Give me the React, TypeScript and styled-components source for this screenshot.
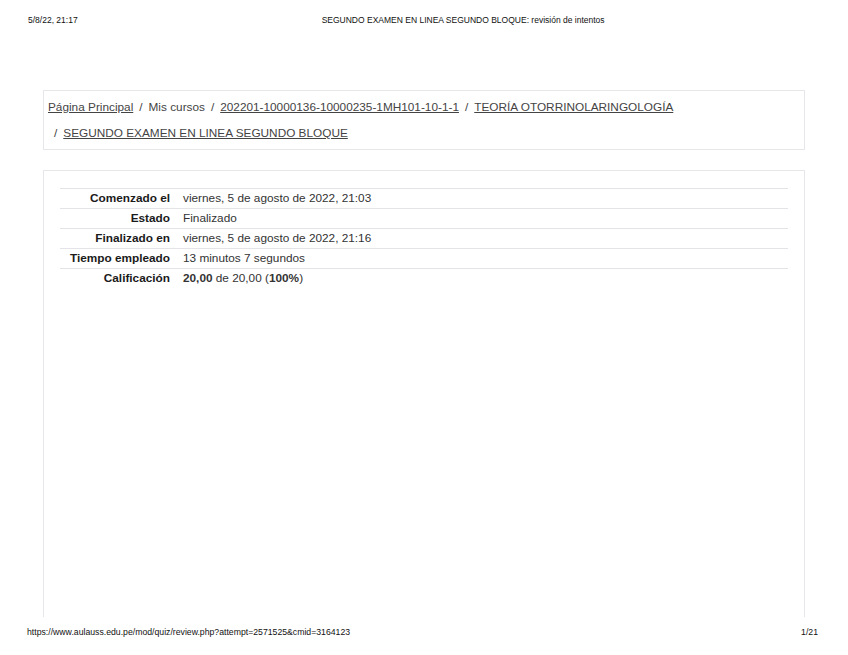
import * as React from 'react';
import styled, { createGlobalStyle } from 'styled-components';

const GlobalStyle = createGlobalStyle`
  html, body {
    margin: 0;
    padding: 0;
    background: #fff;
  }
  body {
    font-family: "Liberation Sans", Arial, sans-serif;
    color: #222;
  }
`;

const Sheet = styled.div`
  height: 655px;
  display: flex;
  flex-direction: column;
  overflow: hidden;
`;

const PrintHeader = styled.header`
  height: 40px;
  display: flex;
  align-items: center;
  padding: 0 28px;
  font-size: 8.5px;
  color: #111;
`;

const HeaderTitle = styled.span`
  margin-left: 244px;
`;

const Content = styled.main`
  flex: 1;
  display: flex;
  flex-direction: column;
  padding: 50px 43px 0;
  min-height: 0;
`;

const Crumbs = styled.nav`
  border: 1px solid #e6e6eb;
  padding: 3px 4px;
`;

const CrumbList = styled.ol`
  display: flex;
  flex-wrap: wrap;
  list-style: none;
  margin: 0;
  padding: 0;
  font-size: 11.8px;
  line-height: 26px;
  color: #444;
`;

const Crumb = styled.li`
  & + &::before {
    content: '/';
    padding: 0 6px;
    color: #444;
  }
`;

const CrumbLink = styled.a`
  color: #444;
  text-decoration: underline;
`;

const Panel = styled.section`
  flex: 1;
  margin-top: 20px;
  border: 1px solid #e6e6eb;
  border-bottom: none;
  padding: 17px 16px 0;
`;

const Summary = styled.table`
  width: 100%;
  border-collapse: collapse;
  font-size: 11.8px;
`;

const Row = styled.tr`
  border-top: 1px solid #e4e4e8;
`;

const Label = styled.th`
  width: 110px;
  padding: 0;
  text-align: right;
  font-weight: bold;
  white-space: nowrap;
  line-height: 19px;
  color: #1a1a1a;
`;

const Value = styled.td`
  padding: 0 0 0 13px;
  line-height: 19px;
  color: #333;
`;

const PrintFooter = styled.footer`
  height: 38px;
  display: flex;
  align-items: center;
  justify-content: space-between;
  padding: 0 30px 8px 27px;
  box-sizing: border-box;
  font-size: 8.7px;
  color: #111;
`;

const crumbs = [
  'Página Principal',
  'Mis cursos',
  '202201-10000136-10000235-1MH101-10-1-1',
  'TEORÍA OTORRINOLARINGOLOGÍA',
  'SEGUNDO EXAMEN EN LINEA SEGUNDO BLOQUE',
];

const App: React.FC = () => (
  <>
    <GlobalStyle />
    <Sheet>
      <PrintHeader>
        <span>5/8/22, 21:17</span>
        <HeaderTitle>SEGUNDO EXAMEN EN LINEA SEGUNDO BLOQUE: revisión de intentos</HeaderTitle>
      </PrintHeader>

      <Content>
        <Crumbs>
          <CrumbList>
            {crumbs.map((c, i) => (
              <Crumb key={c}>
                {i === 1 ? c : <CrumbLink href="#">{c}</CrumbLink>}
              </Crumb>
            ))}
          </CrumbList>
        </Crumbs>

        <Panel>
          <Summary>
            <tbody>
              <Row>
                <Label>Comenzado el</Label>
                <Value>viernes, 5 de agosto de 2022, 21:03</Value>
              </Row>
              <Row>
                <Label>Estado</Label>
                <Value>Finalizado</Value>
              </Row>
              <Row>
                <Label>Finalizado en</Label>
                <Value>viernes, 5 de agosto de 2022, 21:16</Value>
              </Row>
              <Row>
                <Label>Tiempo empleado</Label>
                <Value>13 minutos 7 segundos</Value>
              </Row>
              <Row>
                <Label>Calificación</Label>
                <Value>
                  <b>20,00</b> de 20,00 (<b>100%</b>)
                </Value>
              </Row>
            </tbody>
          </Summary>
        </Panel>
      </Content>

      <PrintFooter>
        <span>https://www.aulauss.edu.pe/mod/quiz/review.php?attempt=2571525&amp;cmid=3164123</span>
        <span>1/21</span>
      </PrintFooter>
    </Sheet>
  </>
);

export default App;
